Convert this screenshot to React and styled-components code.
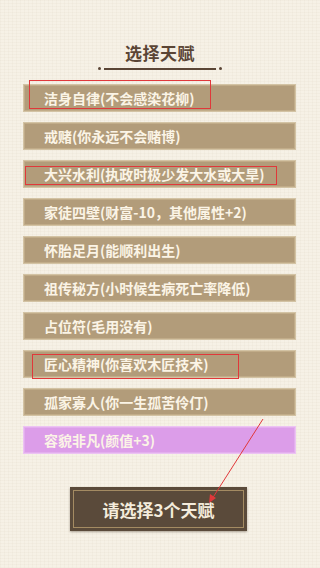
import React from 'react'
import styled, { createGlobalStyle } from 'styled-components'

const GlobalStyle = createGlobalStyle`
  body {
    margin: 0;
    font-family: "Noto Sans CJK SC", "Noto Sans", sans-serif;
  }
`

const Page = styled.div`
  position: relative;
  width: 320px;
  height: 568px;
  overflow: hidden;
  background-color: #f6f1e6;
  background-image:
    repeating-linear-gradient(0deg, rgba(200, 185, 160, 0.08) 0 1px, transparent 1px 3px),
    repeating-linear-gradient(90deg, rgba(200, 185, 160, 0.08) 0 1px, transparent 1px 4px);
  display: flex;
  flex-direction: column;
  align-items: center;
`

const Title = styled.h1`
  margin: 43px 0 0;
  font-size: 17px;
  line-height: 20px;
  font-weight: 700;
  color: #5a4535;
  letter-spacing: 0.5px;
`

const Divider = styled.div`
  position: relative;
  width: 112px;
  height: 2px;
  margin-top: 5px;
  background: #5a4535;

  &::before,
  &::after {
    content: '';
    position: absolute;
    top: -1px;
    width: 3px;
    height: 3px;
    border-radius: 50%;
    background: #5a4535;
  }
  &::before { left: -6px; }
  &::after { right: -6px; }
`

const List = styled.div`
  display: flex;
  flex-direction: column;
  gap: 10px;
  width: 273px;
  margin-top: 14px;
  margin-left: -1px;
`

const Card = styled.div`
  box-sizing: border-box;
  height: 28px;
  display: flex;
  align-items: center;
  padding-left: 20px;
  background: ${p => (p.$rare ? '#dc9de9' : '#b29c7a')};
  border: 1px solid ${p => (p.$rare ? '#ecc2f3' : '#d3c3a4')};
  box-shadow: inset 0 0 0 1px ${p => (p.$rare ? '#e3aeee' : '#c1ac89')};
  color: #fbf4e6;
  font-size: 14px;
  font-weight: 700;
  white-space: nowrap;
`

const Button = styled.div`
  position: relative;
  box-sizing: border-box;
  width: 177px;
  height: 44px;
  margin-top: 33px;
  margin-left: -3px;
  display: flex;
  align-items: center;
  justify-content: center;
  background: #5a4a3a;
  box-shadow: 0 1px 2px rgba(60, 45, 30, 0.4);
  color: #f4ecdc;
  font-size: 17px;
  font-weight: 700;

  &::before {
    content: '';
    position: absolute;
    inset: 3px;
    border: 1px solid #a48b62;
  }
`

const Mark = styled.div`
  position: absolute;
  box-sizing: border-box;
  border: 1px solid #e0383a;
  pointer-events: none;
`

const Arrow = styled.svg`
  position: absolute;
  left: 0;
  top: 0;
  pointer-events: none;
`

const talents = [
  '洁身自律(不会感染花柳)',
  '戒赌(你永远不会赌博)',
  '大兴水利(执政时极少发大水或大旱)',
  '家徒四壁(财富-10，其他属性+2)',
  '怀胎足月(能顺利出生)',
  '祖传秘方(小时候生病死亡率降低)',
  '占位符(毛用没有)',
  '匠心精神(你喜欢木匠技术)',
  '孤家寡人(你一生孤苦伶仃)',
  '容貌非凡(颜值+3)',
]

const marks = [
  { left: 29, top: 80, width: 182, height: 29 },
  { left: 25, top: 166, width: 252, height: 19 },
  { left: 32, top: 354, width: 207, height: 25 },
]

export default function App() {
  return (
    <Page>
      <GlobalStyle />
      <Title>选择天赋</Title>
      <Divider />
      <List>
        {talents.map((t, i) => (
          <Card key={t} $rare={i === talents.length - 1}>{t}</Card>
        ))}
      </List>
      <Button>请选择3个天赋</Button>
      {marks.map((m, i) => (
        <Mark key={i} style={m} />
      ))}
      <Arrow width="320" height="568" viewBox="0 0 320 568">
        <line x1="263" y1="419" x2="212" y2="499" stroke="#e0383a" strokeWidth="1" />
        <polygon points="209,503 210,494 216,498" fill="#e0383a" />
      </Arrow>
    </Page>
  )
}
